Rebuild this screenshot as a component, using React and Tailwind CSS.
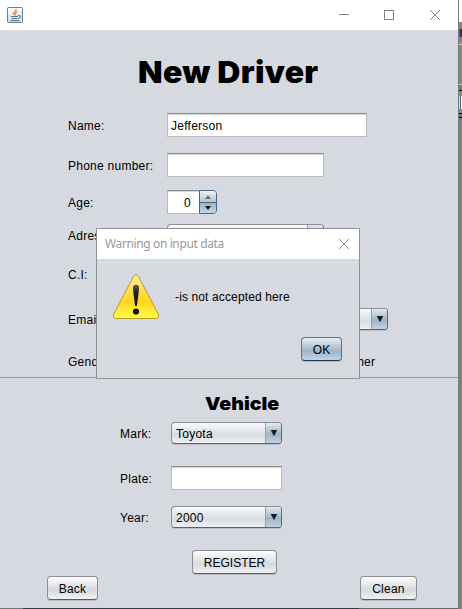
import React from 'react';

const Row = ({ h, label, labelW = 'w-[99px]', children }) => (
  <div className={`flex shrink-0 items-center ${h}`}>
    <span className={`${labelW} shrink-0 pt-[2px] whitespace-nowrap`}>{label}</span>
    {children}
  </div>
);

const Field = ({ w, children }) => (
  <div className={`flex h-6 items-center border border-[#b9b9b9] border-t-[#8c8c8c] bg-white pt-[2px] pl-[3px] shadow-[inset_0_1px_0_#d8d8d8] ${w}`}>
    {children}
  </div>
);

const Combo = ({ w, children }) => (
  <div className={`flex h-[22px] overflow-hidden rounded-[4px] border border-[#8b8e95] border-r-[#526d83] border-b-[#5b6169] bg-linear-to-b from-[#fbfbfc] via-[#d8dbe0] via-60% to-[#eff1f5] shadow-[0_1px_0_#bcc0c8] ${w}`}>
    <span className="flex flex-1 items-center pt-[2px] pl-[4px]">{children}</span>
    <span className="flex w-[16px] items-center justify-center border-l border-[#8ba0b1] bg-linear-to-b from-[#e3ebf1] via-[#9fb4c7] via-55% to-[#bfd3e5]">
      <svg width="8" height="8" viewBox="0 0 8 8"><path d="M.7 1h6.6L4 7.2z" fill="#181c20" /></svg>
    </span>
  </div>
);

const Button = ({ w, children }) => (
  <button className={`flex h-6 items-center justify-center rounded-[4px] border border-[#8b8e95] border-b-[#565a60] bg-linear-to-b from-[#fdfdfd] via-[#d6d9df] via-60% to-[#f0f1f5] pt-[2px] shadow-[0_1px_0_#b5b9c1] ${w}`}>
    {children}
  </button>
);

const Close = () => (
  <svg width="12" height="12" viewBox="0 0 12 12"><path d="M1 1l10 10M11 1L1 11" stroke="#858585" fill="none" /></svg>
);

function JavaIcon() {
  return (
    <svg width="16" height="16" viewBox="0 0 16 16" fill="none">
      <defs>
        <linearGradient id="tile" x2="0" y2="1"><stop stopColor="#fff" /><stop offset="1" stopColor="#cfd9e0" /></linearGradient>
      </defs>
      <rect x=".5" y=".5" width="15" height="15" rx="1" fill="url(#tile)" stroke="#657f91" />
      <path d="M9.200 2C10 4 6 4.500 6.500 6.500L8 8.500M10.500 4.500C8 5.500 8 6.500 9 8" stroke="#e88631" strokeWidth="1.200" />
      <path d="M4 9.500h7M5 11.500h5M3.500 13.500h8.500M11 8.500h1q1.500 0 1.300 1.200-.3 1.600-2.300 1.800" stroke="#59798e" strokeWidth="1.100" />
    </svg>
  );
}

function WarningIcon() {
  return (
    <svg className="shrink-0" width="48" height="46" viewBox="0 0 48 46">
      <defs>
        <linearGradient id="warn" x2="0" y2="1">
          <stop stopColor="#fff0a0" /><stop offset=".3" stopColor="#ffe25c" /><stop offset=".62" stopColor="#ffd51e" /><stop offset="1" stopColor="#ffff4c" />
        </linearGradient>
        <linearGradient id="mark" x2="0" y2="1"><stop stopColor="#555" /><stop offset=".4" stopColor="#202020" /><stop offset="1" stopColor="#111" /></linearGradient>
      </defs>
      <path d="M21.300 2.800Q24-1 26.700 2.800L46 39.500Q48 44.500 43.500 44.500H4.500Q0 44.500 2 39.500z" fill="url(#warn)" stroke="#b99a24" />
      <path d="M21 14Q21 10.800 24 10.800T27 14Q27 18 24.800 32H23.200Q21 18 21 14z" fill="url(#mark)" />
      <circle cx="24" cy="37.500" r="3.100" fill="#151515" />
    </svg>
  );
}

function Dialog() {
  return (
    <section className="absolute left-[96px] top-[228px] flex h-[151px] w-[264px] flex-col border border-[#8d9095] bg-[#d6d9df]">
      <header className="flex h-[30px] shrink-0 items-center justify-between bg-white pl-2 pr-[9px] font-['Noto_Sans',sans-serif] text-[12px] tracking-[-0.38px] text-[#999]">
        <span>Warning on input data</span>
        <Close />
      </header>
      <div className="flex h-[76px] shrink-0 items-center pl-[15px]">
        <WarningIcon />
        <span className="ml-[15px] tracking-[0.13px]">-is not accepted here</span>
      </div>
      <div className="flex justify-end pt-[2px] pr-[17px]">
        <button className="flex h-6 w-[41px] items-center justify-center rounded-[4px] border border-[#617486] border-b-[#233e53] bg-linear-to-b from-[#e8edf2] via-[#9fb4c7] via-60% to-[#c0d5e8] pt-[2px] tracking-normal shadow-[0_1px_0_#b0b6be]">OK</button>
      </div>
    </section>
  );
}

function Spinner() {
  return (
    <div className="flex h-6">
      <div className="flex w-8 items-center justify-end border border-r-0 border-[#b9b9b9] border-t-[#8c8c8c] bg-white pt-[2px] pr-[8px] shadow-[inset_0_1px_0_#d8d8d8]">0</div>
      <div className="flex w-[18px] flex-col overflow-hidden rounded-r-[4px] border border-[#49677e]">
        <span className="flex h-[11px] items-center justify-center bg-linear-to-b from-[#eef2f5] to-[#b5c4d2]">
          <svg width="6" height="4" viewBox="0 0 6 4"><path d="M0 4h6L3 0z" fill="#6d7073" /></svg>
        </span>
        <span className="flex h-[11px] items-center justify-center border-t border-[#49677e] bg-linear-to-b from-[#9db2c5] to-[#c1d6e8]">
          <svg width="6" height="4" viewBox="0 0 6 4"><path d="M0 0h6L3 4z" fill="#111" /></svg>
        </span>
      </div>
    </div>
  );
}

export default function App() {
  return (
    <main className="relative flex h-[609px] w-[462px] overflow-hidden bg-[#d6d9df] font-['Liberation_Sans',Arial,sans-serif] text-[12px] leading-[14px] tracking-[0.25px] text-black">
      <div className="flex w-[458px] shrink-0 flex-col">
        <header className="flex h-[30px] shrink-0 items-center bg-white pl-[7px] pr-[17px]">
          <JavaIcon />
          <div className="ml-auto flex items-center gap-[35px]">
            <svg width="10" height="10" viewBox="0 0 10 10"><path d="M0 4.500h10" stroke="#858585" /></svg>
            <svg width="10" height="10" viewBox="0 0 10 10"><rect x=".5" y=".5" width="9" height="9" fill="none" stroke="#858585" /></svg>
            <Close />
          </div>
        </header>
        <h1 className="flex h-[75px] shrink-0 items-center pt-[9px] pl-[138px] font-['Inter',sans-serif] text-[30px] leading-none font-black tracking-[0.3px] whitespace-nowrap">
          <span className="origin-left scale-x-[1.065]">New Driver</span>
        </h1>
        <div className="flex h-[272px] shrink-0 flex-col pl-[68px]">
          <Row h="h-10" label="Name:"><Field w="w-[200px]">Jefferson</Field></Row>
          <Row h="h-10" label="Phone number:"><Field w="w-[157px]" /></Row>
          <Row h="h-[34px]" label="Age:"><Spinner /></Row>
          <Row h="h-[32px]" label="Adress:"><Combo w="w-[157px]" /></Row>
          <Row h="h-[45px]" label="C.I:" />
          <Row h="h-[46px]" label="Email:"><Combo w="w-[221px]" /></Row>
          <Row h="h-[35px] pt-[3px]" label="Gender:" labelW="w-[276px]"><span className="pt-[2px]">Other</span></Row>
        </div>
        <div className="h-px shrink-0 bg-[#989ba2]" />
        <h2 className="flex h-[35px] shrink-0 items-end pl-[205px] font-['Inter',sans-serif] text-[18px] leading-[18px] font-black tracking-normal">
          <span className="origin-left scale-x-[1.09]">Vehicle</span>
        </h2>
        <div className="flex shrink-0 flex-col pl-[120px]">
          <Row h="h-10" label="Mark:" labelW="w-[51px]"><Combo w="w-[111px]">Toyota</Combo></Row>
          <Row h="h-[50px]" label="Plate:" labelW="w-[51px]"><Field w="w-[111px]" /></Row>
          <Row h="h-7" label="Year:" labelW="w-[51px]"><Combo w="w-[111px]">2000</Combo></Row>
        </div>
        <div className="mt-[19px] shrink-0 pl-[192px]"><Button w="w-[85px] tracking-normal">REGISTER</Button></div>
        <div className="mt-[2px] flex shrink-0 justify-between pr-[41px] pl-[47px]">
          <Button w="w-[51px]">Back</Button>
          <Button w="w-[57px]">Clean</Button>
        </div>
        <div className="mt-auto flex h-px shrink-0"><i className="w-[23px] bg-[#747474]" /><i className="w-[336px] bg-[#333d4b]" /><i className="flex-1 bg-[#656565]" /></div>
      </div>
      <aside className="flex w-1 flex-col border-l border-[#777a7e]">
        <i className="h-[22px] bg-white" />
        <i className="h-[7px] bg-[#858585]" />
        <i className="h-[8px] border-l border-[#2c7a80] bg-[#3a2c55]" />
        <i className="h-[7px] bg-[#858585]" />
        <i className="h-px bg-[#d0d0d0]" />
        <i className="h-[39px] bg-[#858585]" />
        <i className="h-px bg-[#d0d0d0]" />
        <i className="h-[5px] bg-[#777]" />
        <i className="h-px bg-black" />
        <i className="h-[5px] bg-[#888]" />
        <i className="ml-px h-[13px] border-l border-[#3d6890] bg-white" />
        <i className="h-1 bg-[#888]" />
        <i className="h-[5px] border-y border-black bg-[#64748b]" />
        <i className="flex-1 bg-[#808080]" />
      </aside>
      <Dialog />
    </main>
  );
}
